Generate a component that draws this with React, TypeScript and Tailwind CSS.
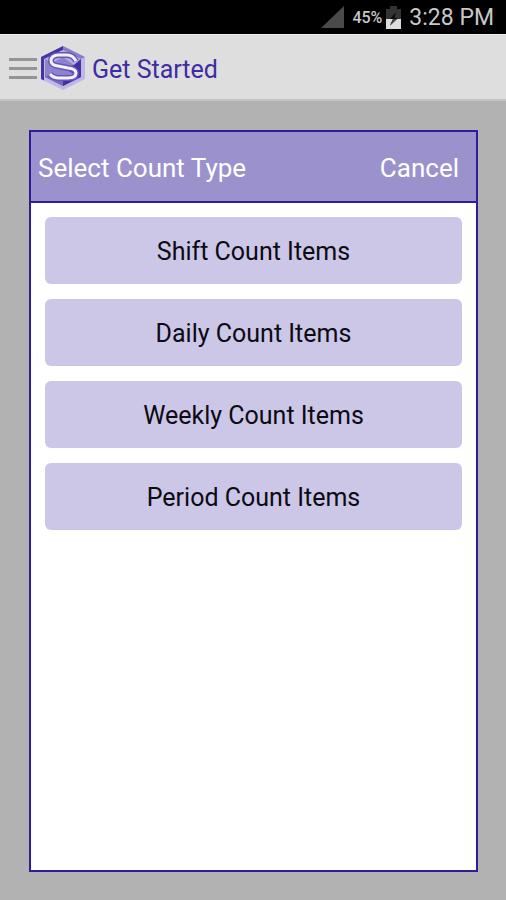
const countTypes = [
  { id: 'shift', label: 'Shift Count Items' },
  { id: 'daily', label: 'Daily Count Items' },
  { id: 'weekly', label: 'Weekly Count Items' },
  { id: 'period', label: 'Period Count Items' },
]

function SignalIcon() {
  return (
    <svg width="23" height="22" viewBox="0 0 23 22" aria-hidden="true">
      <path d="M23 0V22H0Z" fill="#4a4a4a" />
    </svg>
  )
}

function BatteryIcon() {
  return (
    <svg width="15" height="23" viewBox="0 0 15 23" aria-hidden="true">
      <path d="M4 0h7v3h4v20H0V3h4Z" fill="#333" />
      <path d="M0 13h15v10H0Z" fill="#dcdcdc" />
      <path d="M10 6 4 13h3L4 19 12 12H8.500Z" fill="#0c0c0c" />
      <path d="M7 13h4L4 20Z" fill="#444" />
    </svg>
  )
}

function Logo() {
  return (
    <svg width="46" height="46" viewBox="0 0 46 46" aria-hidden="true">
      <path d="M23 1 45 12V34L23 45 1 34V12Z" fill="#c0b7e6" />
      <path d="M23 1 1 12V34L4 35.500V14L23 5Z" fill="#4633a6" />
      <path d="M23 1 45 12 41 14 23 5Z" fill="#8b7ccb" />
      <path d="M23 5 41 14V32L23 41 5 32V14Z" fill="#8f82cd" />
      <path d="M23 5 41 14 34 20 23 12 12 18 5 14Z" fill="#b5abe0" />
      <path d="M41 14V32L23 41V35L34 29 24 23 34 20Z" fill="#4330a4" />
      <path d="M5 32 12 28 23 35V41Z" fill="#7767c1" />
      <path d="M36 16Q33 10 27 10H19Q11 10 11 16 11 20 18 21L28 23Q36 24 36 28 36 33 28 33H19Q13 33 10 29" fill="none" stroke="#6656b8" strokeWidth="6" />
      <path d="M36 16Q33 10 27 10H19Q11 10 11 16 11 20 18 21L28 23Q36 24 36 28 36 33 28 33H19Q13 33 10 29" fill="none" stroke="#f4f1ff" strokeWidth="3" />
    </svg>
  )
}

export default function App() {
  return (
    <div className="flex min-h-screen flex-col bg-[#b2b2b2] font-['Roboto',sans-serif]">
      <div className="flex h-[34px] items-center justify-end bg-black pr-3 text-[#c8c8c8]">
        <SignalIcon />
        <span className="ml-2 pt-[2px] text-[16px] leading-6 font-medium">45%</span>
        <span className="ml-1"><BatteryIcon /></span>
        <span className="ml-2 pt-[2px] text-[23px] leading-8">3:28 PM</span>
      </div>

      <header className="flex h-[67px] items-center border-t border-b-2 border-t-[#eeeeee] border-b-[#c4c4c4] bg-[#dedede] pt-[2px] pl-[9px]">
        <button type="button" aria-label="Menu" className="flex w-7 flex-col gap-[6px]">
          <span className="h-[3px] w-full bg-[#949494]" />
          <span className="h-[3px] w-full bg-[#949494]" />
          <span className="h-[3px] w-full bg-[#949494]" />
        </button>
        <span className="ml-[3px]"><Logo /></span>
        <h1 className="ml-[6px] pt-1 text-[25px] leading-8 text-[#3f2ca2]">Get Started</h1>
      </header>

      <main className="flex flex-1 flex-col pt-[29px] pr-7 pb-7 pl-[29px]">
        <section role="dialog" aria-labelledby="dialog-title" className="flex flex-1 flex-col border-2 border-[#2f1b9c] bg-white">
          <div className="flex h-[71px] items-center justify-between border-b-2 border-[#2f1b9c] bg-[#9b92cd] pt-[2px] pr-[17px] pl-[7px] text-white">
            <h2 id="dialog-title" className="text-[26px] leading-8">Select Count Type</h2>
            <button type="button" className="text-[26px] leading-8">Cancel</button>
          </div>
          <div className="flex flex-col gap-[15px] p-[14px]">
            {countTypes.map(t => (
              <button key={t.id} type="button" className="h-[67px] rounded-md bg-[#ccc6e7] pt-[2px] text-[25px] leading-8 text-[#0c0a12]">
                {t.label}
              </button>
            ))}
          </div>
        </section>
      </main>
    </div>
  )
}
